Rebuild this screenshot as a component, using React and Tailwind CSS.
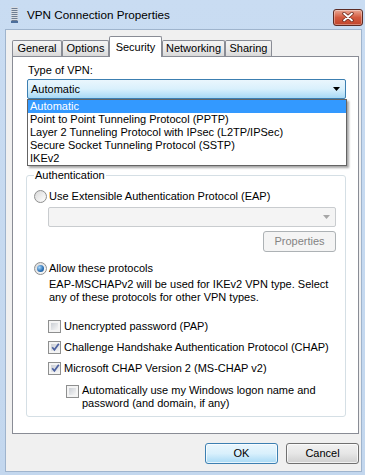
import React from "react";

function Radio({ checked }) {
  return (
    <span className="w-[13px] h-[13px] rounded-full border border-[#8e8f8f] bg-linear-to-br from-[#d8d8d8] to-[#fbfbfb] flex items-center justify-center shrink-0">
      <span className="w-[9px] h-[9px] rounded-full bg-linear-to-br from-[#dcdcdc] to-[#fdfdfd] flex items-center justify-center">
        {checked && (
          <span className="w-[7px] h-[7px] rounded-full bg-[radial-gradient(circle_at_35%_35%,#a8d8fb,#2a6fb4_60%,#1a4f8a)]" />
        )}
      </span>
    </span>
  );
}

function Check({ checked }) {
  return (
    <span className="w-[13px] h-[13px] border border-[#8e8f8f] bg-[#f4f4f4] p-[2px] shrink-0 flex">
      <span className="flex-1 bg-linear-to-br from-[#cbcfd5] to-[#f6f6f6] flex items-center justify-center">
        {checked && (
          <svg width="9" height="9" viewBox="0 0 9 9" className="shrink-0">
            <path d="M1.2 4.2 L3.4 6.8 L7.8 0.8" stroke="#4c61a0" strokeWidth="1.7" fill="none" />
          </svg>
        )}
      </span>
    </span>
  );
}

function Tab({ label, w, selected }) {
  if (selected) {
    return (
      <div
        className={`${w} h-[21px] -mb-px relative z-10 border border-b-0 border-[#898c95] rounded-t-[2px] bg-white flex items-center justify-center leading-[13px]`}
      >
        {label}
      </div>
    );
  }
  return (
    <div
      className={`${w} h-[16px] border border-b-0 border-[#898c95] rounded-t-[2px] bg-linear-to-b from-[#f4f4f4] via-[#ebebeb] to-[#d9d9d9] flex items-center justify-center leading-[13px]`}
    >
      {label}
    </div>
  );
}

export default function App() {
  return (
    <div className="w-[365px] h-[475px] overflow-hidden bg-linear-to-b from-[#c9dcf2] to-[#c3d7ee] flex flex-col font-['Liberation_Sans',Arial,sans-serif] text-[11px] text-black">
      {/* Title bar */}
      <div className="h-[30px] flex items-center relative">
        <svg width="7" height="16" viewBox="0 0 7 16" className="ml-[11px] shrink-0">
          <rect x="0" y="0" width="7" height="16" fill="#d9dde3" />
          {[1, 3, 5, 7, 9, 11, 13].map((y) => (
            <rect key={y} x="0.5" y={y} width="6" height="1" fill="#6e7d92" />
          ))}
          <rect x="0" y="14" width="7" height="2" fill="#4d6f9c" />
        </svg>
        <span className="ml-[9px] text-[11.7px] leading-[14px] text-black">VPN Connection Properties</span>
        <div className="ml-auto mr-[2px] mt-[4px] w-[30px] h-[17px] rounded-[3px] border border-[#5c2b24] bg-linear-to-b from-[#e9a794] via-[#d35a3f] to-[#c0442b] flex items-center justify-center shadow-[inset_0_0_0_1px_rgba(255,255,255,0.35)]">
          <svg width="12" height="10" viewBox="0 0 12 10">
            <path d="M2 1.5 L10 8.5 M10 1.5 L2 8.5" stroke="#6b2a1e" strokeWidth="3.4" strokeLinecap="round" />
            <path d="M2 1.5 L10 8.5 M10 1.5 L2 8.5" stroke="#ffffff" strokeWidth="1.8" strokeLinecap="round" />
          </svg>
        </div>
      </div>

      {/* Client area */}
      <div className="ml-[6px] w-[355px] h-[441px] bg-[#f0f0f0] shadow-[0_0_0_1px_#9fb4cd] pt-[6px] pl-[6px] flex flex-col">
        {/* Tabs */}
        <div className="flex items-end h-[20px]">
          <Tab label="General" w="w-[50px]" />
          <Tab label="Options" w="w-[47px]" />
          <Tab label="Security" w="w-[53px]" selected />
          <Tab label="Networking" w="w-[63px]" />
          <Tab label="Sharing" w="w-[47px]" />
        </div>

        {/* Panel */}
        <div className="w-[347px] h-[378px] border border-[#898c95] bg-white flex flex-col">
          <div className="mt-[7px] ml-[15px] leading-[13px]">Type of VPN:</div>

          {/* Combo with open list */}
          <div className="relative mt-[2px] ml-[14px] w-[319px] h-[20px]">
            <div className="w-full h-full rounded-[2px] border border-[#3c7fb1] bg-linear-to-b from-[#eaf6fd] via-[#d9f0fc] to-[#a7d9f5] flex items-center pl-[3px] pr-[5px]">
              <span className="leading-[13px]">Automatic</span>
              <svg width="7" height="4" viewBox="0 0 7 4" className="ml-auto">
                <path d="M0 0 L7 0 L3.5 4 Z" fill="#000" />
              </svg>
            </div>
            <div className="absolute top-[20px] left-0 w-[320px] z-20 border border-[#646464] bg-white shadow-[2px_2px_2px_rgba(0,0,0,0.35)] flex flex-col">
              <div className="h-[13px] leading-[13px] pl-[2px] bg-[#3399ff] text-white">Automatic</div>
              <div className="h-[13px] leading-[13px] pl-[2px]">Point to Point Tunneling Protocol (PPTP)</div>
              <div className="h-[13px] leading-[13px] pl-[2px]">Layer 2 Tunneling Protocol with IPsec (L2TP/IPSec)</div>
              <div className="h-[13px] leading-[13px] pl-[2px]">Secure Socket Tunneling Protocol (SSTP)</div>
              <div className="h-[13px] leading-[13px] pl-[2px]">IKEv2</div>
            </div>
          </div>

          {/* Authentication group */}
          <fieldset className="mt-[70px] ml-[13px] w-[320px] border border-[#d5dfe5] rounded-[3px] px-[7px] pb-[6px] flex flex-col">
            <legend className="px-[1px] leading-[13px] ml-[0px]">Authentication</legend>

            <div className="mt-[7px] h-[14px] flex items-center gap-[2px]">
              <Radio />
              <span className="leading-[13px]">Use Extensible Authentication Protocol (EAP)</span>
            </div>

            <div className="mt-[4px] ml-[14px] w-[288px] h-[20px] border border-[#c9cccf] rounded-[2px] bg-[#f4f4f4] flex items-center justify-end pr-[5px]">
              <svg width="7" height="4" viewBox="0 0 7 4">
                <path d="M0 0 L7 0 L3.5 4 Z" fill="#a6a6a6" />
              </svg>
            </div>

            <div className="mt-[4px] ml-[229px] w-[73px] h-[21px] border border-[#adb2b5] rounded-[3px] bg-[#f4f4f4] text-[#838383] flex items-center justify-center leading-[13px]">
              Properties
            </div>

            <div className="mt-[9px] h-[14px] flex items-center gap-[2px]">
              <Radio checked />
              <span className="leading-[13px]">Allow these protocols</span>
            </div>

            <div className="mt-[3px] ml-[15px] leading-[13px]">
              EAP-MSCHAPv2 will be used for IKEv2 VPN type. Select
              <br />
              any of these protocols for other VPN types.
            </div>

            <div className="mt-[15px] ml-[14px] h-[14px] flex items-center gap-[3px]">
              <Check />
              <span className="leading-[13px]">Unencrypted password (PAP)</span>
            </div>
            <div className="mt-[7px] ml-[14px] h-[14px] flex items-center gap-[3px]">
              <Check checked />
              <span className="leading-[13px]">Challenge Handshake Authentication Protocol (CHAP)</span>
            </div>
            <div className="mt-[7px] ml-[14px] h-[14px] flex items-center gap-[3px]">
              <Check checked />
              <span className="leading-[13px]">Microsoft CHAP Version 2 (MS-CHAP v2)</span>
            </div>
            <div className="mt-[9px] ml-[32px] flex items-start gap-[3px]">
              <span className="mt-[1px] flex">
                <Check />
              </span>
              <span className="leading-[13px]">
                Automatically use my Windows logon name and
                <br />
                password (and domain, if any)
              </span>
            </div>
          </fieldset>
        </div>

        {/* Buttons */}
        <div className="mt-[9px] w-[347px] flex justify-end gap-[8px]">
          <div className="w-[73px] h-[21px] rounded-[3px] border border-[#3c7fb1] bg-linear-to-b from-[#eaf6fd] via-[#d9f0fc] to-[#a7d9f5] shadow-[inset_0_0_0_1px_rgba(255,255,255,0.7)] flex items-center justify-center leading-[13px]">
            OK
          </div>
          <div className="w-[73px] h-[21px] rounded-[3px] border border-[#707070] bg-linear-to-b from-[#f2f2f2] via-[#e6e6e6] to-[#cfcfcf] shadow-[inset_0_0_0_1px_rgba(255,255,255,0.7)] flex items-center justify-center leading-[13px]">
            Cancel
          </div>
        </div>
      </div>
    </div>
  );
}
